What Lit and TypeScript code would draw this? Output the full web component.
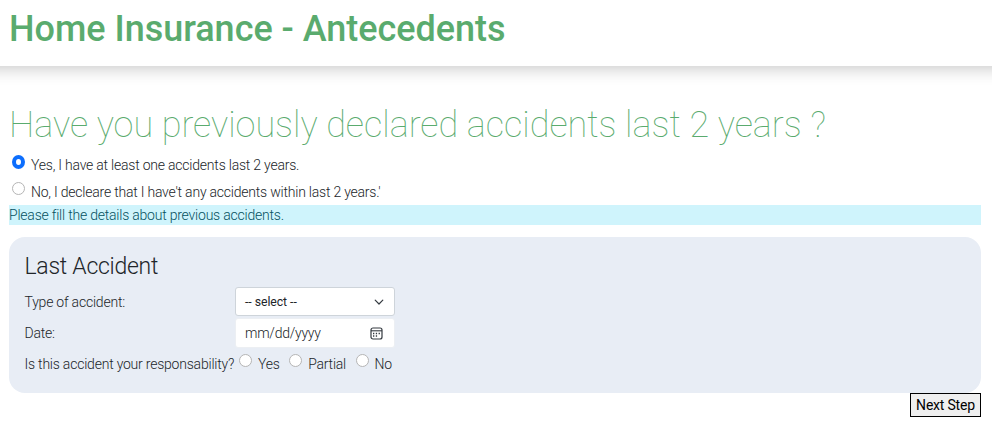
import { LitElement, html, css } from "lit";
import { customElement } from "lit/decorators.js";

@customElement("app-root")
export class AppRoot extends LitElement {
  static styles = css`
    :host {
      display: block;
      height: 426px;
      overflow: hidden;
      background: #fff;
      color: #212529;
      font: 300 14px/20px Roboto, sans-serif;
      letter-spacing: -0.215px;
    }
    * { box-sizing: border-box; }
    header {
      height: 66px;
      padding: 8px 9px 0;
      box-shadow: 0 -20px 16px 22px rgba(0, 0, 0, 0.23);
      background: #fff;
    }
    h1, h2, h3 { margin: 0; white-space: nowrap; }
    h1 { font-size: 36px; line-height: 43px; font-weight: 500; letter-spacing: -0.02px; color: #5aab6e; }
    main { padding: 38px 11px 0 9px; }
    h2 { font-size: 36px; line-height: 43px; font-weight: 100; letter-spacing: -0.01px; color: #5aab6e; }
    .choices { padding-top: 5px; height: 58px; }
    .choice { display: flex; height: 27px; padding-left: 3px; }
    .choice span { padding-top: 3px; margin-left: 6px; white-space: nowrap; }
    .radio {
      appearance: none;
      flex: none;
      width: 13px;
      height: 13px;
      margin: 3px 0 0;
      border: 1px solid #b5b5b5;
      border-radius: 50%;
      background: #fff;
    }
    .radio:checked { height: 14px; border: 4px solid #0d6efd; }
    .notice { height: 20px; line-height: 21px; background: #cff4fc; color: #055160; }
    .card {
      height: 156px;
      margin-top: 12px;
      padding: 16px 16px 0 15.5px;
      border-radius: 16px;
      background: #e8edf5;
    }
    h3 { font-size: 23px; line-height: 28px; font-weight: 300; letter-spacing: -0.27px; }
    .grid {
      display: grid;
      grid-template-columns: 210.5px 160px;
      grid-template-rows: 29px 30px 28px;
      row-gap: 2px;
      margin-top: 6px;
      white-space: nowrap;
    }
    .label { align-self: center; }
    .label:first-child { padding-top: 1px; }
    .label:nth-child(5) { padding-bottom: 1px; }
    .field {
      display: flex;
      align-items: center;
      justify-content: space-between;
      padding: 0 10px 0 9px;
      border: 1px solid #ced4da;
      border-radius: 3px;
      background: #fff;
    }
    .select { font-size: 12.25px; font-weight: 400; letter-spacing: -0.05px; }
    .date { padding-right: 11px; border-color: #eceff3; letter-spacing: -0.25px; }
    .date span { padding-bottom: 1px; }
    svg { display: block; fill: none; stroke: #343a40; }
    .answers { display: flex; align-items: center; padding-left: 4px; }
    .answers span { margin: -1px 9.5px 0 6px; }
    .answers .radio { margin: -8px 0 0; }
    .actions { display: flex; justify-content: flex-end; }
    button {
      width: 71px;
      height: 24px;
      padding: 0 0 1px;
      border: 1px solid #000;
      background: #efefef;
      color: #000;
      font: 400 14px/20px Roboto, sans-serif;
      letter-spacing: -0.2px;
      white-space: nowrap;
    }
  `;

  render() {
    return html`
      <header><h1>Home Insurance - Antecedents</h1></header>
      <main>
        <h2>Have you previously declared accidents last 2 years ?</h2>
        <div class="choices">
          <label class="choice"><input class="radio" type="radio" name="declared" checked /><span>Yes, I have at least one accidents last 2 years.</span></label>
          <label class="choice"><input class="radio" type="radio" name="declared" /><span>No, I decleare that I have't any accidents within last 2 years.'</span></label>
        </div>
        <div class="notice">Please fill the details about previous accidents.</div>
        <section class="card">
          <h3>Last Accident</h3>
          <div class="grid">
            <span class="label">Type of accident:</span>
            <div class="field select">
              <span>-- select --</span>
              <svg width="10" height="10" viewBox="0 0 10 10" stroke-width="1.2" stroke-linecap="round" stroke-linejoin="round"><path d="M1.2 3.2 5 7 8.8 3.2" /></svg>
            </div>
            <span class="label">Date:</span>
            <div class="field date">
              <span>mm/dd/yyyy</span>
              <svg width="13" height="13" viewBox="0 0 13 13"><rect x="1" y="1" width="11" height="11" rx="2" stroke-width="1.2" /><path d="M1 3.8h11" stroke-width="1.1" /><path d="M5.8 6.5h1.3M8.6 6.5h1.3M3 9h1.3M5.8 9h1.3M3 6.5h1.3" stroke-width="1.3" /></svg>
            </div>
            <span class="label">Is this accident your responsability?</span>
            <div class="answers">
              <input class="radio" type="radio" name="fault" /><span>Yes</span>
              <input class="radio" type="radio" name="fault" /><span>Partial</span>
              <input class="radio" type="radio" name="fault" /><span>No</span>
            </div>
          </div>
        </section>
        <div class="actions"><button>Next Step</button></div>
      </main>
    `;
  }
}
